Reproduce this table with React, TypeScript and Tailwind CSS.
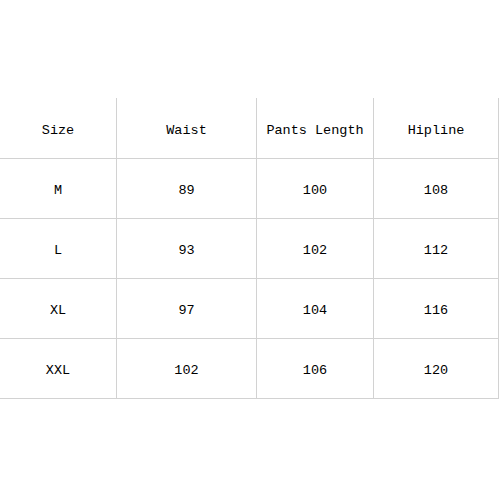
const headers = ["Size", "Waist", "Pants Length", "Hipline"];
const rows = [
  ["M", "89", "100", "108"],
  ["L", "93", "102", "112"],
  ["XL", "97", "104", "116"],
  ["XXL", "102", "106", "120"],
];

function Cell({ children, tall }: { children: React.ReactNode; tall?: boolean }) {
  return (
    <div
      className={`flex items-center justify-center border-b border-r border-[#d2d2d2] pt-[6px] ${
        tall ? "h-[61px]" : "h-[60px]"
      }`}
    >
      {children}
    </div>
  );
}

export default function App() {
  return (
    <div className="h-[500px] w-[500px] bg-white pt-[98px] font-['Liberation_Mono',monospace] text-[13.5px] text-black">
      <div className="grid w-[499px] grid-cols-[117px_140px_117px_125px]">
        {headers.map((h, i) => (
          <Cell key={i} tall>
            {h}
          </Cell>
        ))}
        {rows.map((row) =>
          row.map((v, i) => <Cell key={row[0] + i}>{v}</Cell>)
        )}
      </div>
    </div>
  );
}
